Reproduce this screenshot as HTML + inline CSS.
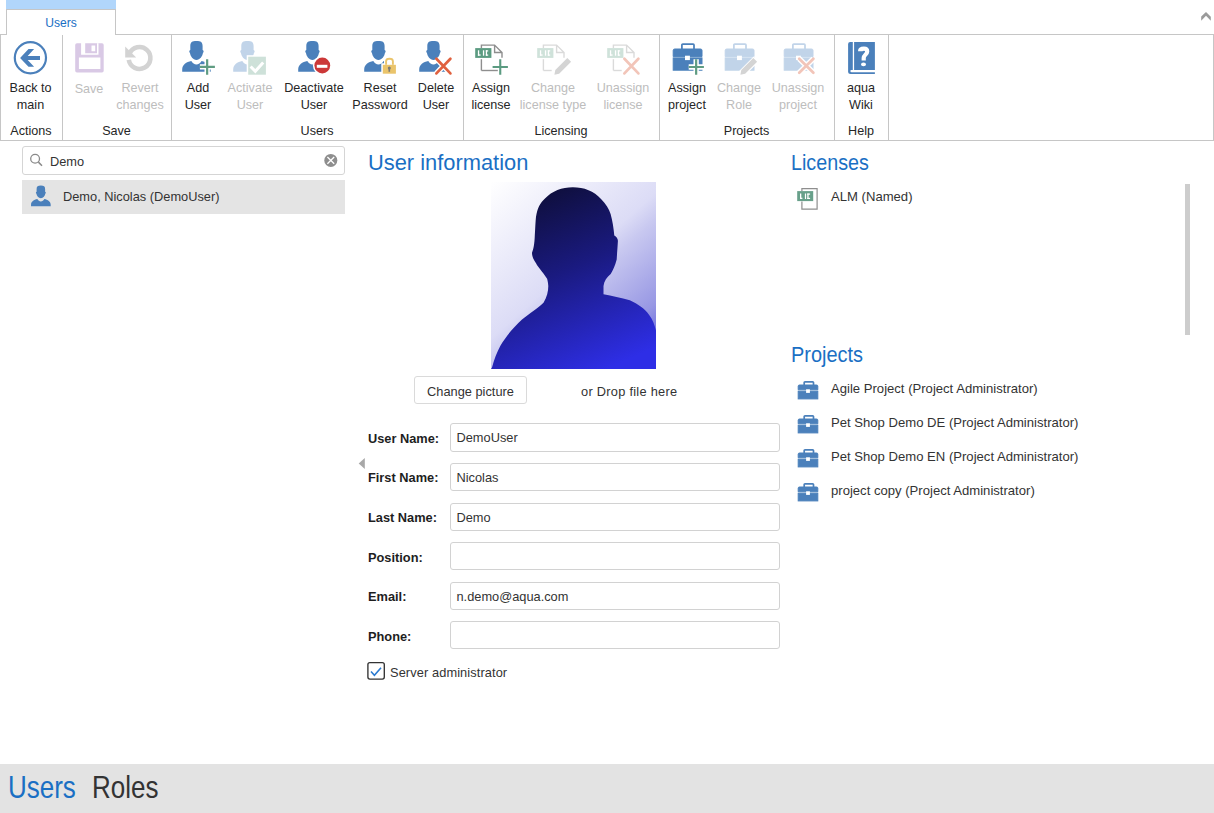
<!DOCTYPE html>
<html><head><meta charset="utf-8">
<style>
*{box-sizing:border-box;margin:0;padding:0}
html,body{width:1214px;height:813px;overflow:hidden;background:#fff;font-family:"Liberation Sans",sans-serif;color:#262626}
.a{position:absolute}
.t{position:absolute;white-space:nowrap;font-size:12.6px;line-height:17px;text-align:center;top:80px!important}
.dis{color:#bdbdbd}
.gl{position:absolute;white-space:nowrap;font-size:12.6px;line-height:15px;text-align:center;top:124px}
.sep{position:absolute;top:35px;width:1px;height:105px;background:#c6c6c6}
.blue{color:#1a6fc4}
.lbl{position:absolute;left:368px;font-weight:bold;font-size:12.8px;white-space:nowrap;color:#1e1e1e}
.inp{position:absolute;left:450px;width:330px;height:28.3px;border:1px solid #d2d2d2;border-radius:3px;font-size:12.8px;padding-left:5.5px;line-height:28px;color:#333}
.li{position:absolute;left:831px;font-size:13.1px;white-space:nowrap;color:#333}
</style></head><body>

<!-- tab strip -->
<div class="a" style="left:6px;top:0;width:110px;height:9px;background:#b1d6fb"></div>
<div class="a" style="left:6px;top:9px;width:110px;height:26px;border:1px solid #c6c6c6;border-bottom:none;background:#fff"></div>
<div class="a blue" style="left:6px;width:110px;top:15px;font-size:12.1px;line-height:17px;text-align:center">Users</div>
<!-- ribbon frame -->
<div class="a" style="left:0;top:34px;width:7px;height:1px;background:#c6c6c6"></div>
<div class="a" style="left:115px;top:34px;width:1099px;height:1px;background:#c6c6c6"></div>
<div class="a" style="left:0;top:34px;width:1px;height:107px;background:#c6c6c6"></div>
<div class="a" style="left:1213px;top:34px;width:1px;height:107px;background:#c6c6c6"></div>
<div class="a" style="left:0;top:140px;width:1214px;height:1px;background:#c6c6c6"></div>
<div class="sep" style="left:62px"></div>
<div class="sep" style="left:171px"></div>
<div class="sep" style="left:463px"></div>
<div class="sep" style="left:659px"></div>
<div class="sep" style="left:834px"></div>
<div class="sep" style="left:888px"></div>
<!-- collapse chevron -->
<svg class="a" style="left:1196px;top:8px" width="18" height="16" viewBox="1196 8 18 16"><path d="M1201.2,16.6 L1206,12.1 L1210.8,16.8 L1210.8,20.7 L1206,15.7 L1201.2,20.7Z" fill="#9a9a9a"/></svg>

<!-- ribbon buttons text -->
<div class="t" style="left:0;width:61px;top:79px">Back to<br>main</div>
<div class="t dis" style="left:64px;width:50px;margin-top:1px">Save</div>
<div class="t dis" style="left:110px;width:60px;top:79px">Revert<br>changes</div>
<div class="t" style="left:173px;width:50px;top:79px">Add<br>User</div>
<div class="t dis" style="left:220px;width:60px;top:79px">Activate<br>User</div>
<div class="t" style="left:279px;width:70px;top:79px">Deactivate<br>User</div>
<div class="t" style="left:345px;width:70px;top:79px">Reset<br>Password</div>
<div class="t" style="left:406px;width:60px;top:79px">Delete<br>User</div>
<div class="t" style="left:461px;width:60px;top:79px">Assign<br>license</div>
<div class="t dis" style="left:508px;width:90px;top:79px">Change<br>license type</div>
<div class="t dis" style="left:588px;width:70px;top:79px">Unassign<br>license</div>
<div class="t" style="left:657px;width:60px;top:79px">Assign<br>project</div>
<div class="t dis" style="left:709px;width:60px;top:79px">Change<br>Role</div>
<div class="t dis" style="left:763px;width:70px;top:79px">Unassign<br>project</div>
<div class="t" style="left:836px;width:50px;top:79px">aqua<br>Wiki</div>

<div class="gl" style="left:0;width:62px">Actions</div>
<div class="gl" style="left:62px;width:109px">Save</div>
<div class="gl" style="left:171px;width:292px">Users</div>
<div class="gl" style="left:463px;width:196px">Licensing</div>
<div class="gl" style="left:659px;width:175px">Projects</div>
<div class="gl" style="left:834px;width:54px">Help</div>

<!-- ICONS -->
<svg class="a" style="left:0;top:0" width="1214" height="141" viewBox="0 0 1214 141">
<defs>
<g id="person"><path d="M15.45,0 C19.8,0 21.6,1.3 21.6,5 L21.6,9 C22.9,9.3 22.9,11.5 22,11.8 C21.4,15.5 19,18.9 15.45,18.9 C11.9,18.9 9.5,15.5 8.9,11.8 C8,11.5 8,9.3 9.3,9 L9.3,5 C9.3,1.3 11.1,0 15.45,0Z"/><path d="M10.3,20.1 C11.6,22.4 13.4,23.6 15.45,23.6 C17.5,23.6 19.3,22.4 20.6,20.1 C25.5,21 29.7,24 29.7,28.5 L29.7,30.7 L1.2,30.7 L1.2,28.5 C1.2,24 5.4,21 10.3,20.1Z"/></g>
<g id="lic"><path d="M6.1,2.9 L6.1,0 L19.3,0 L26.7,7.4 L26.7,12.6 M19.3,0 L19.3,7.4 L26.7,7.4" fill="none" stroke-width="1.4"/><path d="M6.1,14.1 L6.1,25.4" fill="none" stroke-width="1.4"/></g>
<g id="brief"><path d="M8.7,6 L8.7,1.8 Q8.7,0.9 9.6,0.9 L19.9,0.9 Q20.8,0.9 20.8,1.8 L20.8,6" fill="none" stroke-width="1.75"/><path d="M0,13.4 L0,7.3 Q0,5.8 1.5,5.8 L27.3,5.8 Q28.8,5.8 28.8,7.3 L28.8,13.4Z"/><rect x="0" y="14.7" width="28.8" height="12.3"/></g>
</defs>
<!-- back -->
<circle cx="30.4" cy="57.8" r="15.6" fill="none" stroke="#4b80bb" stroke-width="2.2"/>
<path d="M20.1,57.9 L28.5,49.1 L34.1,49.1 L27.7,56 L40,56 L40,59.9 L27.7,59.9 L34.1,66.8 L28.5,66.8Z" fill="#4b80bb"/>
<!-- save -->
<path fill="#d9c9e5" fill-rule="evenodd" d="M75.2,45 Q75.2,43.2 77,43.2 L81.1,43.2 L81.1,54.7 L97,54.7 L97,43.2 L98.5,43.2 L102,43.2 Q103.7,43.2 103.7,45 L103.7,70.7 Q103.7,72.5 102,72.5 L77,72.5 Q75.2,72.5 75.2,70.7Z M78.9,57.6 L78.9,69.1 L100.4,69.1 L100.4,57.6Z"/>
<path fill="#d9c9e5" fill-rule="evenodd" d="M85.2,43.2 L97,43.2 L97,53.2 L85.2,53.2Z M91.5,45.4 L91.5,51.3 L95.2,51.3 L95.2,45.4Z"/>
<rect x="97" y="43.2" width="1.5" height="11.5" fill="#fff"/>
<!-- revert -->
<path d="M128.77,59.89 A10.9,10.9 0 1 0 129.47,53.74" fill="none" stroke="#d3d3d3" stroke-width="4.6"/>
<path d="M125.2,46.6 L125.2,57.6 L136.2,57.6Z" fill="#d3d3d3"/>
<!-- persons -->
<g fill="#4b80bb"><use href="#person" x="181" y="41"/><use href="#person" x="297" y="41"/><use href="#person" x="363" y="41"/><use href="#person" x="418" y="41"/></g>
<g fill="#c1d4e9"><use href="#person" x="232" y="41"/></g>
<!-- add plus -->
<path d="M207.15,59.2 L207.15,74.7 M199.9,66.9 L214.9,66.9" stroke="#fff" stroke-width="5.3"/>
<path d="M207.15,59.2 L207.15,74.7 M199.9,66.9 L214.9,66.9" stroke="#5f9c82" stroke-width="2.2"/>
<!-- activate -->
<rect x="246.7" y="55.2" width="20.7" height="21" fill="#fff"/>
<rect x="248.2" y="56.7" width="17.7" height="18" fill="#cee1d9"/>
<path d="M250.6,66.5 L255.3,71.3 L263.2,62.4" fill="none" stroke="#fff" stroke-width="3"/>
<!-- deactivate -->
<circle cx="322.3" cy="65.5" r="9.4" fill="#fff"/>
<circle cx="322.3" cy="65.5" r="7.9" fill="#cc3838"/>
<rect x="316.8" y="64.8" width="10.6" height="3" fill="#fff"/>
<!-- reset lock -->
<path d="M381.3,63.3 L384,63.3 L384,60 Q384,56.4 389.5,56.4 Q395,56.4 395,60 L395,63.3 L397.4,63.3 L397.4,75.2 L381.3,75.2Z" fill="#fff"/>
<path d="M386.1,64.8 L386.1,61.2 Q386.1,58.8 389.5,58.8 Q392.9,58.8 392.9,61.2 L392.9,64.8" fill="none" stroke="#eac46b" stroke-width="1.9"/>
<rect x="382.8" y="64.8" width="13.1" height="8.9" fill="#eac46b"/>
<circle cx="389.3" cy="68" r="1.5" fill="#7d7a74"/><rect x="388.5" y="68" width="1.6" height="3.8" fill="#7d7a74"/>
<!-- delete x -->
<path d="M436.4,58.7 L450.4,73.4 M450.4,58.7 L436.4,73.4" stroke="#fff" stroke-width="5.5"/>
<path d="M436.4,58.7 L450.4,73.4 M450.4,58.7 L436.4,73.4" stroke="#e0613f" stroke-width="2.7" stroke-linecap="round"/>
<!-- licensing -->
<g stroke="#8e8e8e"><use href="#lic" x="475.3" y="45.1"/></g>
<path d="M481.4,70.5 L497.8,70.5" stroke="#8e8e8e" stroke-width="1.4"/>
<rect x="475.2" y="48.1" width="16.2" height="9.8" fill="#5b9b81"/>
<g fill="#fff"><rect x="477.9" y="50.3" width="1.3" height="5.4"/><rect x="477.9" y="54.4" width="2.7" height="1.3"/><rect x="482.9" y="50.3" width="1.3" height="5.4"/><rect x="485.8" y="50.3" width="1.3" height="5.4"/><rect x="485.8" y="50.3" width="2.4" height="1.2"/><rect x="485.8" y="54.5" width="2.4" height="1.2"/></g>
<path d="M500.25,59.2 L500.25,74.7 M492.6,67 L507.9,67" stroke="#5b9b81" stroke-width="2.1"/>

<g stroke="#dadada"><use href="#lic" x="537.3" y="45.1"/></g>
<path d="M543.4,70.5 L551.7,70.5" stroke="#dadada" stroke-width="1.4"/>
<rect x="537.2" y="48.1" width="16.2" height="9.8" fill="#cfe2da"/>
<g fill="#fff"><rect x="539.9" y="50.3" width="1.3" height="5.4"/><rect x="539.9" y="54.4" width="2.7" height="1.3"/><rect x="544.9" y="50.3" width="1.3" height="5.4"/><rect x="547.8" y="50.3" width="1.3" height="5.4"/><rect x="547.8" y="50.3" width="2.4" height="1.2"/><rect x="547.8" y="54.5" width="2.4" height="1.2"/></g>
<path d="M554.4,74.7 L555.3,70.0 L567.3,58.0 L571.1,61.8 L559.1,73.8Z" fill="#d4d4d4"/>

<g stroke="#dadada"><use href="#lic" x="607.3" y="45.1"/></g>
<path d="M613.4,70.5 L621.7,70.5" stroke="#dadada" stroke-width="1.4"/>
<rect x="607.2" y="48.1" width="16.2" height="9.8" fill="#cfe2da"/>
<g fill="#fff"><rect x="609.9" y="50.3" width="1.3" height="5.4"/><rect x="609.9" y="54.4" width="2.7" height="1.3"/><rect x="614.9" y="50.3" width="1.3" height="5.4"/><rect x="617.8" y="50.3" width="1.3" height="5.4"/><rect x="617.8" y="50.3" width="2.4" height="1.2"/><rect x="617.8" y="54.5" width="2.4" height="1.2"/></g>
<path d="M624.4,58.7 L638.4,73.4 M638.4,58.7 L624.4,73.4" stroke="#fff" stroke-width="5.5"/>
<path d="M624.4,58.7 L638.4,73.4 M638.4,58.7 L624.4,73.4" stroke="#f2c5b9" stroke-width="2.7" stroke-linecap="round"/>

<!-- projects -->
<g fill="#4b80bb" stroke="#4b80bb"><use href="#brief" x="673.2" y="43.2"/></g>
<rect x="685" y="55.7" width="4.9" height="4.4" fill="#fff"/>
<path d="M696.15,59.2 L696.15,74.7 M688.7,67 L703.9,67" stroke="#fff" stroke-width="5.3"/>
<path d="M696.15,59.2 L696.15,74.7 M688.7,67 L703.9,67" stroke="#5f9c82" stroke-width="2.2"/>

<g fill="#c1d4e9" stroke="#c1d4e9"><use href="#brief" x="725.2" y="43.2"/></g>
<rect x="737" y="55.7" width="4.9" height="4.4" fill="#fff"/>
<path d="M738.9,77 L739.6,70.5 L753.6,56.5 L758.8,61.7 L744.8,75.7Z" fill="#fff"/>
<path d="M740.4,74.7 L741.3,70.0 L753.3,58.0 L757.1,61.8 L745.1,73.8Z" fill="#d4d4d4"/>

<g fill="#c1d4e9" stroke="#c1d4e9"><use href="#brief" x="784.2" y="43.2"/></g>
<rect x="796" y="55.7" width="4.9" height="4.4" fill="#fff"/>
<path d="M799.2,58.7 L813.4,72.7 M813.4,58.7 L799.2,72.7" stroke="#fff" stroke-width="5.5"/>
<path d="M799.2,58.7 L813.4,72.7 M813.4,58.7 L799.2,72.7" stroke="#f2c5b9" stroke-width="2.7" stroke-linecap="round"/>

<!-- book -->
<path d="M850.1,41.9 L874.9,41.9 L874.9,73.9 L850.6,73.9 Q848.1,73.9 848.1,71.4 L848.1,43.9 Q848.1,41.9 850.1,41.9Z" fill="#4b80bb"/>
<rect x="852.8" y="41" width="1.3" height="29.1" fill="#fff"/>
<path d="M851.4,70 L875,70 L875,72.2 L851.4,72.2 Q850.3,72.2 850.3,71.1 Q850.3,70 851.4,70Z" fill="#fff"/>
<path d="M860.1,51.2 C860.1,49.8 861.5,48.7 863.9,48.7 C866,48.7 867.2,49.9 867.2,51.5 C867.2,54.3 863.7,55 863.7,58 L863.7,60.6" fill="none" stroke="#fff" stroke-width="4.2"/>
<ellipse cx="863.5" cy="64.4" rx="2.5" ry="1.8" fill="#fff"/>
</svg>


<!-- left panel -->
<div class="a" style="left:22px;top:146px;width:323px;height:29px;border:1px solid #d5d5d5;border-radius:3px"></div>
<div class="a" style="left:50px;top:154px;font-size:12.8px;color:#333">Demo</div>
<svg class="a" style="left:0;top:140px" width="360" height="80" viewBox="0 140 360 80">
<circle cx="35.1" cy="158.8" r="4.4" fill="none" stroke="#8a8a8a" stroke-width="1.3"/>
<path d="M38.4,162.1 L42,165.7" stroke="#8a8a8a" stroke-width="1.5"/>
<circle cx="330.8" cy="160.4" r="6.5" fill="#8e8e8e"/>
<path d="M327.4,157 L334.2,163.8 M334.2,157 L327.4,163.8" stroke="#fff" stroke-width="1.3"/>
</svg>
<div class="a" style="left:22px;top:180px;width:323px;height:34px;background:#e4e4e4"></div>
<div class="a" style="left:63px;top:189px;font-size:12.8px;color:#333;white-space:nowrap">Demo, Nicolas (DemoUser)</div>
<svg class="a" style="left:0;top:180px" width="60" height="34" viewBox="0 180 60 34"><g fill="#4b80bb" transform="translate(30.2,185.6) scale(0.69,0.67)"><path d="M15.45,0 C19.8,0 21.6,1.3 21.6,5 L21.6,9 C22.9,9.3 22.9,11.5 22,11.8 C21.4,15.5 19,18.9 15.45,18.9 C11.9,18.9 9.5,15.5 8.9,11.8 C8,11.5 8,9.3 9.3,9 L9.3,5 C9.3,1.3 11.1,0 15.45,0Z"/><path d="M10.3,20.1 C11.6,22.4 13.4,23.6 15.45,23.6 C17.5,23.6 19.3,22.4 20.6,20.1 C25.5,21 29.7,24 29.7,28.5 L29.7,30.7 L1.2,30.7 L1.2,28.5 C1.2,24 5.4,21 10.3,20.1Z"/></g></svg>

<!-- middle -->
<div class="a blue" style="left:368px;top:150px;font-size:22.3px;white-space:nowrap;transform:scaleX(0.98);transform-origin:0 0">User information</div>
<svg class="a" style="left:491px;top:182px" width="165" height="187" viewBox="491 182 165 187">
<defs>
<linearGradient id="pbg" gradientUnits="userSpaceOnUse" x1="491" y1="182" x2="656" y2="369"><stop offset="0" stop-color="#ffffff"/><stop offset="0.47" stop-color="#dcdcf6"/><stop offset="0.55" stop-color="#c8c8f0"/><stop offset="0.8" stop-color="#9898e4"/><stop offset="1" stop-color="#4848dc"/></linearGradient>
<linearGradient id="psil" x1="0.3" y1="0" x2="0.7" y2="1"><stop offset="0" stop-color="#0e0e38"/><stop offset="0.45" stop-color="#1a1a80"/><stop offset="1" stop-color="#2e2ee6"/></linearGradient>
</defs>
<rect x="491" y="182" width="165" height="187" fill="url(#pbg)"/>
<path fill="url(#psil)" d="M572.8,187.2 C584,187.2 594,191 601,199 C606,204 609,209 610.6,214 C612.5,221 613.6,228 614.3,235.5 C616.5,237 618,238.5 617.9,241 C617.5,248 617,254 616.7,259.5 C615,266 613,270 610.7,273.9 C607,277 604,281 603.5,285.9 L603.5,294.3 C612,296 621,298 629.8,300.3 C638,304 645,309 649,314.7 C653,320 655,326 656.2,331.4 L656.2,369 L491,369 L492,367.4 C494,360 497,352 500.4,345.8 C506,336 514,327 522,319.5 C530,313 538,308 543.5,302.7 C547,297 548.3,291 548.3,285.9 C548,282 547.5,280 547.1,278.7 C542,271 538,267 536,263.2 C533,259 532,256 532,252.8 C533.5,249 534.5,244 534.8,235.5 C535.3,228 535.5,221 536,216.8 C537.5,208 540,203 545,198.5 C552,191 562,187.2 572.8,187.2Z"/>
</svg>
<div class="a" style="left:414px;top:376px;width:113px;height:28px;border:1px solid #dadada;border-radius:3px;font-size:12.8px;text-align:center;line-height:30px;color:#333">Change picture</div>
<div class="a" style="left:581px;top:384px;font-size:12.8px;color:#333;white-space:nowrap;letter-spacing:0.27px">or Drop file here</div>

<div class="lbl" style="top:431px">User Name:</div>
<div class="lbl" style="top:470px">First Name:</div>
<div class="lbl" style="top:510px">Last Name:</div>
<div class="lbl" style="top:550px">Position:</div>
<div class="lbl" style="top:589px">Email:</div>
<div class="lbl" style="top:629px">Phone:</div>
<div class="inp" style="top:423.4px">DemoUser</div>
<div class="inp" style="top:463.2px">Nicolas</div>
<div class="inp" style="top:502.5px">Demo</div>
<div class="inp" style="top:542.2px"></div>
<div class="inp" style="top:581.5px">n.demo@aqua.com</div>
<div class="inp" style="top:621.2px"></div>
<svg class="a" style="left:350px;top:450px" width="40" height="240" viewBox="350 450 40 240">
<path d="M358.7,463.4 L364.8,457.9 L364.8,468.9Z" fill="#a8a8a8"/>
<rect x="367.9" y="662.6" width="16.4" height="16.5" rx="2" fill="none" stroke="#333" stroke-width="1.35"/>
<path d="M371,671.5 L374.4,675.2 L381,667.8" fill="none" stroke="#2a7ad0" stroke-width="1.6"/>
</svg>
<div class="a" style="left:390px;top:665px;font-size:12.8px;color:#333;white-space:nowrap;letter-spacing:0.1px">Server administrator</div>

<!-- right -->
<div class="a blue" style="left:791px;top:150px;font-size:22.3px;white-space:nowrap;transform:scaleX(0.885);transform-origin:0 0">Licenses</div>
<div class="li" style="top:189px">ALM (Named)</div>
<svg class="a" style="left:780px;top:180px" width="60" height="330" viewBox="780 180 60 330">
<defs><g id="lbrief"><path d="M6,4.2 L6,1.6 Q6,0.8 6.8,0.8 L14.5,0.8 Q15.3,0.8 15.3,1.6 L15.3,4.2" fill="none" stroke-width="1.7"/><path d="M0,8.8 L0,5.2 Q0,4 1.2,4 L18.4,4 Q19.6,4 19.6,5.2 L19.6,8.8Z"/><rect x="0" y="10.2" width="19.6" height="7.7"/><rect x="7.9" y="8.3" width="3.8" height="3.6" fill="#fff" stroke="none"/></g></defs>
<path d="M801.9,191 L801.9,188.6 L817.1,188.6 L817.1,209.1 L801.9,209.1 L801.9,201.5" fill="none" stroke="#8e8e8e" stroke-width="1.2"/>
<rect x="797.2" y="191.1" width="16" height="10" fill="#68a08a"/>
<g fill="#fff"><rect x="800" y="193.5" width="1.3" height="5.5"/><rect x="800" y="197.7" width="2.4" height="1.3"/><rect x="804.9" y="193.5" width="1.2" height="5.5"/><rect x="807.3" y="193.5" width="1.3" height="5.5"/><rect x="807.3" y="193.5" width="2.8" height="1.2"/><rect x="807.3" y="197.8" width="2.8" height="1.2"/></g>
<g fill="#4b80bb" stroke="#4b80bb"><use href="#lbrief" x="798.2" y="381"/><use href="#lbrief" x="798.2" y="415"/><use href="#lbrief" x="798.2" y="449"/><use href="#lbrief" x="798.2" y="483"/></g>
</svg>
<div class="a" style="left:1185px;top:184px;width:5px;height:151px;background:#cdcdcd"></div>
<div class="a blue" style="left:791px;top:342px;font-size:22.3px;white-space:nowrap;transform:scaleX(0.895);transform-origin:0 0">Projects</div>
<div class="li" style="top:381px">Agile Project (Project Administrator)</div>
<div class="li" style="top:415px">Pet Shop Demo DE (Project Administrator)</div>
<div class="li" style="top:449px">Pet Shop Demo EN (Project Administrator)</div>
<div class="li" style="top:483px">project copy (Project Administrator)</div>

<!-- bottom bar -->
<div class="a" style="left:0;top:764px;width:1214px;height:49px;background:#e3e3e3"></div>
<div class="a blue" style="left:8px;top:769px;font-size:31.5px;white-space:nowrap;transform:scaleX(0.825);transform-origin:0 0">Users</div>
<div class="a" style="left:92px;top:769px;font-size:31.5px;white-space:nowrap;color:#333;transform:scaleX(0.825);transform-origin:0 0">Roles</div>
</body></html>
